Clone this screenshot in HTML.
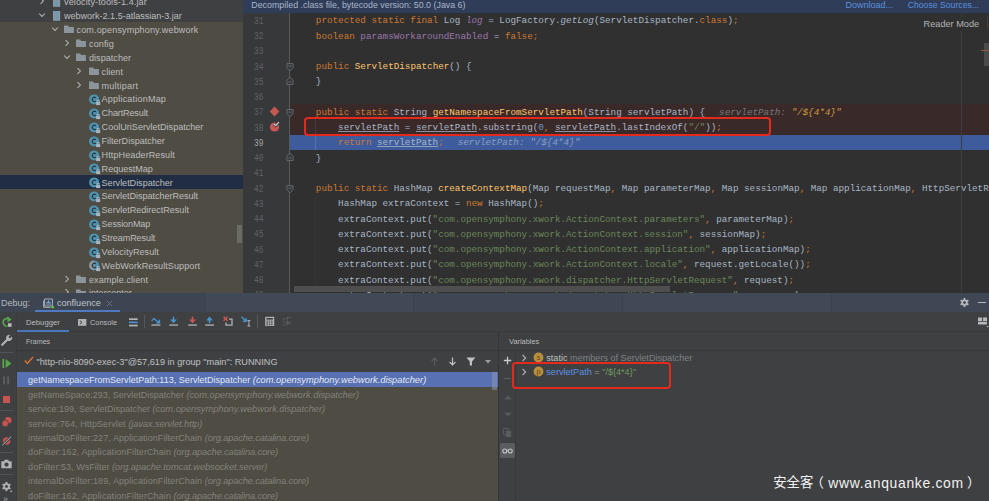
<!DOCTYPE html>
<html><head><meta charset="utf-8"><title>Debug</title>
<style>
*{box-sizing:border-box;margin:0;padding:0}
html,body{width:989px;height:501px;overflow:hidden;background:#3e4042;}
body{position:relative;font-family:"Liberation Sans", "Noto Sans CJK SC", sans-serif;font-size:9.2px;color:#bbbbbb;}
.abs{position:absolute}
#tree{position:absolute;left:0;top:0;width:243px;height:293px;background:#4f4c43;overflow:hidden}
#tree .top{position:absolute;left:0;top:0;width:243px;height:21.6px;background:#3e4042}
.tr{position:absolute;left:0;width:243px;height:13.86px;line-height:13.86px;white-space:pre;color:#bdbdbd;font-size:9.08px}
.tr.sel{background:transparent}
.tr span.t{position:absolute;top:1px}
.tr svg{position:absolute}
#editor{position:absolute;left:243px;top:0;width:746px;height:293px;background:#303030;overflow:hidden}
#banner{position:absolute;left:0;top:0;width:746px;height:13.4px;background:#2f3d59;color:#aab6c8;line-height:10px;font-size:8.87px;white-space:pre}
#banner span{position:absolute;top:0.1px}
#banner .lnk{color:#5b8fdd}
#gutter{position:absolute;left:0;top:13.4px;width:47px;height:280px;background:#373839;border-right:1px solid #58595b}
.ln{transform:scale(0.85,1.14);transform-origin:0 50%;position:absolute;left:10.6px;font-family:"Liberation Mono", monospace;font-size:9.27px;color:#606366;line-height:15.25px;height:15.25px}
.cl{position:absolute;left:50.6px;font-family:"Liberation Mono", monospace;font-size:9.27px;color:#a9b7c6;line-height:15.25px;height:15.25px;white-space:pre}
.k{color:#cc7832} .s{color:#6a8759} .m{color:#ffc66d} .f{color:#9876aa} .n{color:#6897bb}
.i{font-style:italic} .u{text-decoration:underline;text-underline-offset:1.2px;text-decoration-thickness:0.7px;text-decoration-color:rgba(169,183,198,0.75)}
.h{color:#787878;font-style:italic} .hv{color:#cc9b3e;font-style:italic}

#dbg{position:absolute;left:0;top:293px;width:989px;height:208px;background:#3e4042;overflow:hidden}
#dbg .hdr{position:absolute;left:0;top:0;width:989px;height:19px;background:#3d4553}
.tx{position:absolute;white-space:pre;line-height:12px;height:12px;font-size:9.1px;color:#bbbbbb}
.fr{position:absolute;left:28.1px;white-space:pre;line-height:14.4px;height:14.4px;font-size:9.01px;color:#83827c}
.fr i{font-style:italic;font-size:9.29px}
.hl{position:absolute;height:1px;background:#323232}
.vl{position:absolute;width:1px;background:#323232}
</style></head>
<body>
<div id="tree"><div class="top"></div><div class="abs" style="left:0;top:175px;width:243px;height:14px;background:#202d43"></div>
<div class="tr" style="top:-4.63px"><svg class="abs" style="left:36.8px;top:1.0299999999999994px" width="10" height="10" viewBox="-5 -5 10 10"><path d="M-1.5,-2.9 L1.4,0 L-1.5,2.9" fill="none" stroke="#b4b6b6" stroke-width="1.05"/></svg><svg class="abs" style="left:52.9px;top:1.5299999999999994px" width="8" height="10" viewBox="0 0 8 10"><rect x="0" y="0" width="7.2" height="9.8" fill="#8d969d"/><path d="M2.1,0 h1.4 v1.2 h-1.4z M3.4,1.2 h1.4 v1.2 h-1.4z M2.1,2.4 h1.4 v1.2 h-1.4z M3.4,3.6 h1.4 v1.2 h-1.4z M2.1,4.8 h1.4 v1.2 h-1.4z M3.4,6 h1.4 v1.2 h-1.4z M2.1,7.2 h1.4 v1.2 h-1.4z M3.4,8.4 h1.4 v1.4 h-1.4z" fill="#4a9fd4"/></svg><span class="t" style="left:64px;letter-spacing:0.098px">velocity-tools-1.4.jar</span></div>
<div class="tr" style="top:9.23px"><svg class="abs" style="left:36.8px;top:1.0299999999999994px" width="10" height="10" viewBox="-5 -5 10 10"><path d="M-2.9,-1.5 L0,1.4 L2.9,-1.5" fill="none" stroke="#b4b6b6" stroke-width="1.05"/></svg><svg class="abs" style="left:52.9px;top:1.5299999999999994px" width="8" height="10" viewBox="0 0 8 10"><rect x="0" y="0" width="7.2" height="9.8" fill="#8d969d"/><path d="M2.1,0 h1.4 v1.2 h-1.4z M3.4,1.2 h1.4 v1.2 h-1.4z M2.1,2.4 h1.4 v1.2 h-1.4z M3.4,3.6 h1.4 v1.2 h-1.4z M2.1,4.8 h1.4 v1.2 h-1.4z M3.4,6 h1.4 v1.2 h-1.4z M2.1,7.2 h1.4 v1.2 h-1.4z M3.4,8.4 h1.4 v1.4 h-1.4z" fill="#4a9fd4"/></svg><span class="t" style="left:64px;letter-spacing:-0.03px">webwork-2.1.5-atlassian-3.jar</span></div>
<div class="tr" style="top:23.09px"><svg class="abs" style="left:49.6px;top:1.0299999999999994px" width="10" height="10" viewBox="-5 -5 10 10"><path d="M-2.9,-1.5 L0,1.4 L2.9,-1.5" fill="none" stroke="#b4b6b6" stroke-width="1.05"/></svg><svg class="abs" style="left:64px;top:2.33px" width="10" height="9" viewBox="0 0 10 9"><path d="M0,0.4 H4.2 L5,1.9 H9.9 V8 H0 Z" fill="#8d959c"/></svg><span class="t" style="left:76.5px;letter-spacing:0.128px">com.opensymphony.webwork</span></div>
<div class="tr" style="top:36.95px"><svg class="abs" style="left:61.900000000000006px;top:1.0299999999999994px" width="10" height="10" viewBox="-5 -5 10 10"><path d="M-1.5,-2.9 L1.4,0 L-1.5,2.9" fill="none" stroke="#b4b6b6" stroke-width="1.05"/></svg><svg class="abs" style="left:75.9px;top:2.33px" width="10" height="9" viewBox="0 0 10 9"><path d="M0,0.4 H4.2 L5,1.9 H9.9 V8 H0 Z" fill="#8d959c"/></svg><span class="t" style="left:89px;letter-spacing:0.111px">config</span></div>
<div class="tr" style="top:50.81px"><svg class="abs" style="left:61.900000000000006px;top:1.0299999999999994px" width="10" height="10" viewBox="-5 -5 10 10"><path d="M-2.9,-1.5 L0,1.4 L2.9,-1.5" fill="none" stroke="#b4b6b6" stroke-width="1.05"/></svg><svg class="abs" style="left:75.9px;top:2.33px" width="10" height="9" viewBox="0 0 10 9"><path d="M0,0.4 H4.2 L5,1.9 H9.9 V8 H0 Z" fill="#8d959c"/></svg><span class="t" style="left:89px;letter-spacing:0.021px">dispatcher</span></div>
<div class="tr" style="top:64.67px"><svg class="abs" style="left:74.2px;top:1.0299999999999994px" width="10" height="10" viewBox="-5 -5 10 10"><path d="M-1.5,-2.9 L1.4,0 L-1.5,2.9" fill="none" stroke="#b4b6b6" stroke-width="1.05"/></svg><svg class="abs" style="left:89.2px;top:2.33px" width="10" height="9" viewBox="0 0 10 9"><path d="M0,0.4 H4.2 L5,1.9 H9.9 V8 H0 Z" fill="#8d959c"/></svg><span class="t" style="left:101.6px;letter-spacing:0.033px">client</span></div>
<div class="tr" style="top:78.53px"><svg class="abs" style="left:74.2px;top:1.0299999999999994px" width="10" height="10" viewBox="-5 -5 10 10"><path d="M-1.5,-2.9 L1.4,0 L-1.5,2.9" fill="none" stroke="#b4b6b6" stroke-width="1.05"/></svg><svg class="abs" style="left:89.2px;top:2.33px" width="10" height="9" viewBox="0 0 10 9"><path d="M0,0.4 H4.2 L5,1.9 H9.9 V8 H0 Z" fill="#8d959c"/></svg><span class="t" style="left:101.6px;letter-spacing:0.199px">multipart</span></div>
<div class="tr" style="top:92.39px"><svg class="abs" style="left:88.8px;top:1.7299999999999995px" width="12" height="12" viewBox="0 0 12 12"><circle cx="5.1" cy="5.4" r="5" fill="#4f92ae"/><path d="M6.9,3.9 A2.1,2.1 0 1 0 6.9,6.9" fill="none" stroke="#27353d" stroke-width="1.15"/><rect x="7.1" y="8.1" width="4.1" height="3" fill="#a9b4bf"/><rect x="8.2" y="6.5" width="2" height="2.2" fill="none" stroke="#a9b4bf" stroke-width="0.8"/></svg><span class="t" style="left:101.6px;letter-spacing:0.173px">ApplicationMap</span></div>
<div class="tr" style="top:106.25px"><svg class="abs" style="left:88.8px;top:1.7299999999999995px" width="12" height="12" viewBox="0 0 12 12"><circle cx="5.1" cy="5.4" r="5" fill="#4f92ae"/><path d="M6.9,3.9 A2.1,2.1 0 1 0 6.9,6.9" fill="none" stroke="#27353d" stroke-width="1.15"/><rect x="7.1" y="8.1" width="4.1" height="3" fill="#a9b4bf"/><rect x="8.2" y="6.5" width="2" height="2.2" fill="none" stroke="#a9b4bf" stroke-width="0.8"/></svg><span class="t" style="left:101.6px;letter-spacing:-0.149px">ChartResult</span></div>
<div class="tr" style="top:120.11px"><svg class="abs" style="left:88.8px;top:1.7299999999999995px" width="12" height="12" viewBox="0 0 12 12"><circle cx="5.1" cy="5.4" r="5" fill="#4f92ae"/><path d="M6.9,3.9 A2.1,2.1 0 1 0 6.9,6.9" fill="none" stroke="#27353d" stroke-width="1.15"/><rect x="7.1" y="8.1" width="4.1" height="3" fill="#a9b4bf"/><rect x="8.2" y="6.5" width="2" height="2.2" fill="none" stroke="#a9b4bf" stroke-width="0.8"/></svg><span class="t" style="left:101.6px;letter-spacing:-0.005px">CoolUriServletDispatcher</span></div>
<div class="tr" style="top:133.97px"><svg class="abs" style="left:88.8px;top:1.7299999999999995px" width="12" height="12" viewBox="0 0 12 12"><circle cx="5.1" cy="5.4" r="5" fill="#4f92ae"/><path d="M6.9,3.9 A2.1,2.1 0 1 0 6.9,6.9" fill="none" stroke="#27353d" stroke-width="1.15"/><rect x="7.1" y="8.1" width="4.1" height="3" fill="#a9b4bf"/><rect x="8.2" y="6.5" width="2" height="2.2" fill="none" stroke="#a9b4bf" stroke-width="0.8"/></svg><span class="t" style="left:101.6px;letter-spacing:-0.024px">FilterDispatcher</span></div>
<div class="tr" style="top:147.83px"><svg class="abs" style="left:88.8px;top:1.7299999999999995px" width="12" height="12" viewBox="0 0 12 12"><circle cx="5.1" cy="5.4" r="5" fill="#4f92ae"/><path d="M6.9,3.9 A2.1,2.1 0 1 0 6.9,6.9" fill="none" stroke="#27353d" stroke-width="1.15"/><rect x="7.1" y="8.1" width="4.1" height="3" fill="#a9b4bf"/><rect x="8.2" y="6.5" width="2" height="2.2" fill="none" stroke="#a9b4bf" stroke-width="0.8"/></svg><span class="t" style="left:101.6px;letter-spacing:0.071px">HttpHeaderResult</span></div>
<div class="tr" style="top:161.69px"><svg class="abs" style="left:88.8px;top:1.7299999999999995px" width="12" height="12" viewBox="0 0 12 12"><circle cx="5.1" cy="5.4" r="5" fill="#4f92ae"/><path d="M6.9,3.9 A2.1,2.1 0 1 0 6.9,6.9" fill="none" stroke="#27353d" stroke-width="1.15"/><rect x="7.1" y="8.1" width="4.1" height="3" fill="#a9b4bf"/><rect x="8.2" y="6.5" width="2" height="2.2" fill="none" stroke="#a9b4bf" stroke-width="0.8"/></svg><span class="t" style="left:101.6px;letter-spacing:-0.018px">RequestMap</span></div>
<div class="tr sel" style="top:175.55px"><svg class="abs" style="left:88.8px;top:1.7299999999999995px" width="12" height="12" viewBox="0 0 12 12"><circle cx="5.1" cy="5.4" r="5" fill="#4f92ae"/><path d="M6.9,3.9 A2.1,2.1 0 1 0 6.9,6.9" fill="none" stroke="#27353d" stroke-width="1.15"/><rect x="7.1" y="8.1" width="4.1" height="3" fill="#a9b4bf"/><rect x="8.2" y="6.5" width="2" height="2.2" fill="none" stroke="#a9b4bf" stroke-width="0.8"/></svg><span class="t" style="left:101.6px;letter-spacing:-0.033px">ServletDispatcher</span></div>
<div class="tr" style="top:189.41px"><svg class="abs" style="left:88.8px;top:1.7299999999999995px" width="12" height="12" viewBox="0 0 12 12"><circle cx="5.1" cy="5.4" r="5" fill="#4f92ae"/><path d="M6.9,3.9 A2.1,2.1 0 1 0 6.9,6.9" fill="none" stroke="#27353d" stroke-width="1.15"/><rect x="7.1" y="8.1" width="4.1" height="3" fill="#a9b4bf"/><rect x="8.2" y="6.5" width="2" height="2.2" fill="none" stroke="#a9b4bf" stroke-width="0.8"/></svg><span class="t" style="left:101.6px;letter-spacing:-0.047px">ServletDispatcherResult</span></div>
<div class="tr" style="top:203.27px"><svg class="abs" style="left:88.8px;top:1.7299999999999995px" width="12" height="12" viewBox="0 0 12 12"><circle cx="5.1" cy="5.4" r="5" fill="#4f92ae"/><path d="M6.9,3.9 A2.1,2.1 0 1 0 6.9,6.9" fill="none" stroke="#27353d" stroke-width="1.15"/><rect x="7.1" y="8.1" width="4.1" height="3" fill="#a9b4bf"/><rect x="8.2" y="6.5" width="2" height="2.2" fill="none" stroke="#a9b4bf" stroke-width="0.8"/></svg><span class="t" style="left:101.6px;letter-spacing:-0.024px">ServletRedirectResult</span></div>
<div class="tr" style="top:217.13px"><svg class="abs" style="left:88.8px;top:1.7299999999999995px" width="12" height="12" viewBox="0 0 12 12"><circle cx="5.1" cy="5.4" r="5" fill="#4f92ae"/><path d="M6.9,3.9 A2.1,2.1 0 1 0 6.9,6.9" fill="none" stroke="#27353d" stroke-width="1.15"/><rect x="7.1" y="8.1" width="4.1" height="3" fill="#a9b4bf"/><rect x="8.2" y="6.5" width="2" height="2.2" fill="none" stroke="#a9b4bf" stroke-width="0.8"/></svg><span class="t" style="left:101.6px;letter-spacing:-0.137px">SessionMap</span></div>
<div class="tr" style="top:230.99px"><svg class="abs" style="left:88.8px;top:1.7299999999999995px" width="12" height="12" viewBox="0 0 12 12"><circle cx="5.1" cy="5.4" r="5" fill="#4f92ae"/><path d="M6.9,3.9 A2.1,2.1 0 1 0 6.9,6.9" fill="none" stroke="#27353d" stroke-width="1.15"/><rect x="7.1" y="8.1" width="4.1" height="3" fill="#a9b4bf"/><rect x="8.2" y="6.5" width="2" height="2.2" fill="none" stroke="#a9b4bf" stroke-width="0.8"/></svg><span class="t" style="left:101.6px;letter-spacing:-0.117px">StreamResult</span></div>
<div class="tr" style="top:244.85px"><svg class="abs" style="left:88.8px;top:1.7299999999999995px" width="12" height="12" viewBox="0 0 12 12"><circle cx="5.1" cy="5.4" r="5" fill="#4f92ae"/><path d="M6.9,3.9 A2.1,2.1 0 1 0 6.9,6.9" fill="none" stroke="#27353d" stroke-width="1.15"/><rect x="7.1" y="8.1" width="4.1" height="3" fill="#a9b4bf"/><rect x="8.2" y="6.5" width="2" height="2.2" fill="none" stroke="#a9b4bf" stroke-width="0.8"/></svg><span class="t" style="left:101.6px;letter-spacing:0.012px">VelocityResult</span></div>
<div class="tr" style="top:258.71px"><svg class="abs" style="left:88.8px;top:1.7299999999999995px" width="12" height="12" viewBox="0 0 12 12"><circle cx="5.1" cy="5.4" r="5" fill="#4f92ae"/><path d="M5.1,0.4 A5,5 0 0 0 5.1,10.4 Z" fill="#8f9599"/><path d="M6.9,3.9 A2.1,2.1 0 1 0 6.9,6.9" fill="none" stroke="#27353d" stroke-width="1.15"/><rect x="7.1" y="8.1" width="4.1" height="3" fill="#a9b4bf"/><rect x="8.2" y="6.5" width="2" height="2.2" fill="none" stroke="#a9b4bf" stroke-width="0.8"/></svg><span class="t" style="left:101.6px;letter-spacing:0.078px">WebWorkResultSupport</span></div>
<div class="tr" style="top:272.57px"><svg class="abs" style="left:61.900000000000006px;top:1.0299999999999994px" width="10" height="10" viewBox="-5 -5 10 10"><path d="M-1.5,-2.9 L1.4,0 L-1.5,2.9" fill="none" stroke="#b4b6b6" stroke-width="1.05"/></svg><svg class="abs" style="left:75.9px;top:2.33px" width="10" height="9" viewBox="0 0 10 9"><path d="M0,0.4 H4.2 L5,1.9 H9.9 V8 H0 Z" fill="#8d959c"/></svg><span class="t" style="left:89px;letter-spacing:0.069px">example.client</span></div>
<div class="tr" style="top:286.43px"><svg class="abs" style="left:61.900000000000006px;top:1.0299999999999994px" width="10" height="10" viewBox="-5 -5 10 10"><path d="M-1.5,-2.9 L1.4,0 L-1.5,2.9" fill="none" stroke="#b4b6b6" stroke-width="1.05"/></svg><svg class="abs" style="left:75.9px;top:2.33px" width="10" height="9" viewBox="0 0 10 9"><path d="M0,0.4 H4.2 L5,1.9 H9.9 V8 H0 Z" fill="#8d959c"/></svg><span class="t" style="left:89px;letter-spacing:0px">interceptor</span></div>
<div class="abs" style="left:236.5px;top:225px;width:5.6px;height:18px;background:#6c6b63"></div>
</div>
<div id="editor">
<div class="abs" style="left:47px;top:104.2px;width:700px;height:30.6px;background:#3a2929"></div>
<div class="abs" style="left:47px;top:134.8px;width:700px;height:15.2px;background:#3e5c9c"></div>
<div id="gutter"></div>
<div class="abs" style="left:71.8px;top:119px;width:1px;height:16px;background:#4a3a3a"></div>
<div class="abs" style="left:71.8px;top:135px;width:1px;height:15px;background:#5573b0"></div>
<div class="abs" style="left:71.8px;top:196px;width:1px;height:97px;background:#353535"></div>
<div class="abs" style="left:717.9px;top:13.6px;width:1px;height:280px;background:#3e3e3e"></div>
<div class="ln" style="top:13.87px;color:#606366">31</div>
<div class="ln" style="top:29.12px;color:#606366">32</div>
<div class="ln" style="top:44.38px;color:#606366">33</div>
<div class="ln" style="top:59.63px;color:#606366">34</div>
<div class="ln" style="top:74.88px;color:#606366">35</div>
<div class="ln" style="top:90.12px;color:#606366">36</div>
<div class="ln" style="top:105.38px;color:#606366">37</div>
<div class="ln" style="top:120.62px;color:#606366">38</div>
<div class="ln" style="top:135.88px;color:#a4a3a3">39</div>
<div class="ln" style="top:151.12px;color:#606366">40</div>
<div class="ln" style="top:166.38px;color:#606366">41</div>
<div class="ln" style="top:181.62px;color:#606366">42</div>
<div class="ln" style="top:196.88px;color:#606366">43</div>
<div class="ln" style="top:212.12px;color:#606366">44</div>
<div class="ln" style="top:227.38px;color:#606366">45</div>
<div class="ln" style="top:242.62px;color:#606366">46</div>
<div class="ln" style="top:257.88px;color:#606366">47</div>
<div class="ln" style="top:273.12px;color:#606366">48</div>
<div class="ln" style="top:288.38px;color:#606366">49</div>
<div class="cl" style="top:13.27px">    <span class="k">protected static final</span> Log <span class="f i">log</span> = LogFactory.<span class="i">getLog</span>(ServletDispatcher.<span class="k">class</span>)<span class="k">;</span></div>
<div class="cl" style="top:28.52px">    <span class="k">boolean </span><span class="f">paramsWorkaroundEnabled</span> = <span class="k">false;</span></div>
<div class="cl" style="top:59.03px">    <span class="k">public </span><span class="m">ServletDispatcher</span>() {</div>
<div class="cl" style="top:74.28px">    }</div>
<div class="cl" style="top:104.78px">    <span class="k">public static</span> String <span class="m">getNamespaceFromServletPath</span>(String servletPath) {<span class="h" style="margin-left:14px">servletPath: </span><span class="hv">&quot;/${4*4}&quot;</span></div>
<div class="cl" style="top:120.03px">        <span class="u">servletPath</span> = <span class="u">servletPath</span>.substring(<span class="n">0</span><span class="k">, </span><span class="u">servletPath</span>.lastIndexOf(<span class="s">&quot;/&quot;</span>))<span class="k">;</span></div>
<div class="cl" style="top:135.28px">        <span class="k">return </span><span class="u">servletPath</span><span class="k">;</span><span class="h" style="color:#8c9fc2;margin-left:14px">servletPath: &quot;/${4*4}&quot;</span></div>
<div class="cl" style="top:150.53px">    }</div>
<div class="cl" style="top:181.03px">    <span class="k">public static</span> HashMap <span class="m">createContextMap</span>(Map requestMap<span class="k">,</span> Map parameterMap<span class="k">,</span> Map sessionMap<span class="k">,</span> Map applicationMap<span class="k">,</span> HttpServletRequest request<span class="k">,</span> HttpServletResponse response</div>
<div class="cl" style="top:196.28px">        HashMap extraContext = <span class="k">new</span> HashMap()<span class="k">;</span></div>
<div class="cl" style="top:211.53px">        extraContext.put(<span class="s">&quot;com.opensymphony.xwork.ActionContext.parameters&quot;</span><span class="k">, </span>parameterMap)<span class="k">;</span></div>
<div class="cl" style="top:226.78px">        extraContext.put(<span class="s">&quot;com.opensymphony.xwork.ActionContext.session&quot;</span><span class="k">, </span>sessionMap)<span class="k">;</span></div>
<div class="cl" style="top:242.03px">        extraContext.put(<span class="s">&quot;com.opensymphony.xwork.ActionContext.application&quot;</span><span class="k">, </span>applicationMap)<span class="k">;</span></div>
<div class="cl" style="top:257.27px">        extraContext.put(<span class="s">&quot;com.opensymphony.xwork.ActionContext.locale&quot;</span><span class="k">, </span>request.getLocale())<span class="k">;</span></div>
<div class="cl" style="top:272.52px">        extraContext.put(<span class="s">&quot;com.opensymphony.xwork.dispatcher.HttpServletRequest&quot;</span><span class="k">, </span>request)<span class="k">;</span></div>
<div class="cl" style="top:287.77px">        extraContext.put(<span class="s">&quot;com.opensymphony.xwork.dispatcher.HttpServletResponse&quot;</span><span class="k">, </span>response)<span class="k">;</span></div>
<svg class="abs" style="left:25.8px;top:106.2px" width="11" height="11" viewBox="-5.5 -5.5 11 11"><path d="M0,-4.9 L4.8,0 L0,4.9 L-4.8,0 Z" fill="#c55853"/></svg>
<svg class="abs" style="left:25.8px;top:120.5px" width="12" height="12" viewBox="-5.5 -6 12 12"><circle cx="0" cy="0" r="4.6" fill="#c55853"/><path d="M-0.6,-3 L1.3,-1.4 L4.4,-4.8" fill="none" stroke="#373839" stroke-width="2.6"/><path d="M-0.6,-3 L1.3,-1.4 L4.4,-4.8" fill="none" stroke="#e4e4e4" stroke-width="1.1"/></svg>
<svg class="abs" style="left:41.6px;top:61.75px" width="10" height="10" viewBox="-5 -5 10 10"><path d="M-3.1,-3.4 H3.1 V0.6 L0,3.9 L-3.1,0.6 Z M-1.6,-0.9 H1.6" fill="#373839" stroke="#6a6c6f" stroke-width="0.9"/></svg>
<svg class="abs" style="left:41.6px;top:75.80px" width="10" height="10" viewBox="-5 -5 10 10"><path d="M-3.1,3.6 H3.1 V-0.6 L0,-4 L-3.1,-0.6 Z M-1.6,1 H1.6" fill="#373839" stroke="#6a6c6f" stroke-width="0.9"/></svg>
<svg class="abs" style="left:41.6px;top:107.50px" width="10" height="10" viewBox="-5 -5 10 10"><path d="M-3.1,-3.4 H3.1 V0.6 L0,3.9 L-3.1,0.6 Z M-1.6,-0.9 H1.6" fill="#373839" stroke="#6a6c6f" stroke-width="0.9"/></svg>
<svg class="abs" style="left:41.6px;top:152.05px" width="10" height="10" viewBox="-5 -5 10 10"><path d="M-3.1,3.6 H3.1 V-0.6 L0,-4 L-3.1,-0.6 Z M-1.6,1 H1.6" fill="#373839" stroke="#6a6c6f" stroke-width="0.9"/></svg>
<svg class="abs" style="left:41.6px;top:183.75px" width="10" height="10" viewBox="-5 -5 10 10"><path d="M-3.1,-3.4 H3.1 V0.6 L0,3.9 L-3.1,0.6 Z M-1.6,-0.9 H1.6" fill="#373839" stroke="#6a6c6f" stroke-width="0.9"/></svg>
<div class="abs" style="left:61px;top:116.6px;width:467px;height:19.4px;border:2.4px solid #e5291d;border-radius:4px"></div>
<div class="abs" style="left:676.6px;top:17px;padding:1.5px 6px 1.5px 4px;background:#303030;font-size:9.16px;line-height:11px;color:#b3b3b3;white-space:pre">Reader Mode</div>
<div class="abs" style="left:744px;top:16px;width:1px;height:13px;background:#404040"></div>
<div class="abs" style="left:741.4px;top:42.8px;width:5px;height:23.5px;background:#4b4b4b"></div>
<div class="abs" style="left:738.3px;top:50.3px;width:8px;height:1px;background:#8f5a3c"></div>
<div class="abs" style="left:51px;top:286.3px;width:376px;height:6px;background:#4e4e4e"></div>
<div id="banner"><span style="left:8.3px">Decompiled .class file, bytecode version: 50.0 (Java 6)</span><span class="lnk" style="left:602.6px;font-size:9px">Download...</span><span class="lnk" style="left:664.7px;font-size:8.68px">Choose Sources...</span></div>
</div>
<div id="dbg">
<div class="hdr"></div>
<div class="abs" style="left:0px;top:0;width:205px;height:19px;background:#3d4553"></div>
<div class="abs" style="left:205px;top:0;width:208px;height:19px;background:#414957"></div>
<div class="abs" style="left:413px;top:0;width:209px;height:19px;background:#3f4755"></div>
<div class="abs" style="left:622px;top:0;width:209px;height:19px;background:#414957"></div>
<div class="abs" style="left:831px;top:0;width:158px;height:19px;background:#3f4755"></div>
<div class="abs" style="left:205px;top:0;width:1px;height:19px;background:#3a424f"></div>
<div class="abs" style="left:413px;top:0;width:1px;height:19px;background:#3a424f"></div>
<div class="abs" style="left:622px;top:0;width:1px;height:19px;background:#3a424f"></div>
<div class="abs" style="left:831px;top:0;width:1px;height:19px;background:#3a424f"></div>
<div class="abs" style="left:34.9px;top:16.80000000000001px;width:85px;height:2.2px;background:#4f7ac0"></div>
<div class="tx" style="left:1px;top:4.199999999999989px;font-size:9.02px;color:#b4b8bd">Debug:</div>
<div class="tx" style="left:56.9px;top:4.199999999999989px;font-size:9.1px;color:#bfc3c7">confluence</div>
<svg class="abs" style="left:43px;top:5px" width="12" height="11" viewBox="0 0 12 11"><path d="M1.6,1 H9.4 V8 H1.6 Z" fill="none" stroke="#a8b0ba" stroke-width="1"/><path d="M0.5,2.6 V9.4 H7.5" fill="none" stroke="#a8b0ba" stroke-width="0.9"/><path d="M3.3,4.3 H7.8 M5.5,2.4 V4.3 M3.3,6 H7.8" stroke="#7fb0d8" stroke-width="1"/><circle cx="9.8" cy="9.3" r="1.3" fill="#4fd12a"/></svg>
<svg class="abs" style="left:105.5px;top:7.199999999999989px" width="7" height="7" viewBox="0 0 7 7"><path d="M1,1 L6,6 M6,1 L1,6" stroke="#6e7682" stroke-width="0.9"/></svg>
<svg class="abs" style="left:958.6px;top:4px" width="11" height="11" viewBox="-6 -6 12 12"><g fill="#b4b8bd"><circle r="3.4"/><rect x="-1" y="-4.9" width="2" height="2.4" transform="rotate(0)"/><rect x="-1" y="-4.9" width="2" height="2.4" transform="rotate(60)"/><rect x="-1" y="-4.9" width="2" height="2.4" transform="rotate(120)"/><rect x="-1" y="-4.9" width="2" height="2.4" transform="rotate(180)"/><rect x="-1" y="-4.9" width="2" height="2.4" transform="rotate(240)"/><rect x="-1" y="-4.9" width="2" height="2.4" transform="rotate(300)"/></g><circle r="1.5" fill="#3d4553"/></svg>
<div class="abs" style="left:977.5px;top:9px;width:8px;height:1.2px;background:#b4b8bd"></div>
<svg class="abs" style="left:977.8px;top:24.19999999999999px" width="11" height="11" viewBox="0 0 11 11"><path d="M0,0.5 h4 v3.4 h-4z M5,0.5 h4 v3.4 h-4z M0,4.8 h9 v2.8 h-9z" fill="#b4b8bd"/><path d="M8.4,9 h2.6 l-1.3,1.5z" fill="#b4b8bd"/></svg>
<div class="vl" style="left:16px;top:19px;height:190px;background:#393b3d"></div>
<div class="hl" style="left:0;top:58.69999999999999px;width:13px;background:#515456"></div>
<div class="hl" style="left:0;top:117.39999999999998px;width:13px;background:#515456"></div>
<div class="hl" style="left:0;top:159px;width:13px;background:#515456"></div>
<div class="hl" style="left:0;top:181px;width:13px;background:#515456"></div>
<svg class="abs" style="left:0.5px;top:23.399999999999977px" width="12" height="12" viewBox="0 0 12 12"><path d="M6.6,10.2 A3.9,3.9 0 1 1 9.4,4.2" fill="none" stroke="#57a64a" stroke-width="1.7"/><path d="M6.4,0.4 L10.6,3.6 L6.4,6.6 Z" fill="#57a64a"/><rect x="7" y="7.2" width="3.6" height="3.6" fill="#b7b9bb"/></svg>
<svg class="abs" style="left:0.5px;top:41px" width="12" height="12" viewBox="0 0 12 12"><path d="M1.2,10.8 L6.2,5.8" stroke="#b0b2b4" stroke-width="2.2" stroke-linecap="round"/><path d="M10.9,2.6 L8.9,4.4 L7.4,3 L9.3,1.1 A3.1,3.1 0 1 0 10.9,2.6 Z" fill="#b0b2b4"/></svg>
<svg class="abs" style="left:2px;top:64.80000000000001px" width="10" height="11" viewBox="0 0 10 11"><rect x="0.4" y="1" width="1.8" height="9" fill="#57a64a"/><path d="M3.6,1 L9.4,5.5 L3.6,10 Z" fill="#57a64a"/></svg>
<svg class="abs" style="left:2px;top:83px" width="9" height="9" viewBox="0 0 9 9"><rect x="1.2" y="0.5" width="1.8" height="8" fill="#5d6062"/><rect x="5.2" y="0.5" width="1.8" height="8" fill="#5d6062"/></svg>
<div class="abs" style="left:2.8px;top:103px;width:7.3px;height:7.4px;background:#c75450"></div>
<svg class="abs" style="left:1px;top:122.60000000000002px" width="12" height="12" viewBox="0 0 12 12"><circle cx="7.2" cy="4.2" r="3.3" fill="#c75450"/><circle cx="4.2" cy="7.4" r="3.3" fill="#c75450" stroke="#3e4042" stroke-width="0.7"/></svg>
<svg class="abs" style="left:1px;top:141.60000000000002px" width="12" height="12" viewBox="0 0 12 12"><circle cx="5.6" cy="6" r="3.7" fill="#c75450"/><path d="M1.4,10.2 L10.2,1.6" stroke="#3e4042" stroke-width="2.6"/><path d="M1.4,10.2 L10.2,1.6" stroke="#b6b8ba" stroke-width="1"/></svg>
<svg class="abs" style="left:1px;top:165.60000000000002px" width="11" height="10" viewBox="0 0 11 10"><path d="M0.3,2.2 H3 L3.8,0.7 H7.2 L8,2.2 H10.7 V9.2 H0.3 Z" fill="#b0b2b4"/><circle cx="5.5" cy="5.6" r="2.1" fill="#3e4042"/></svg>
<svg class="abs" style="left:0.5px;top:187.5px" width="13" height="13" viewBox="-5.5 -5.5 13 13"><g fill="#b0b2b4"><circle r="3.2"/><rect x="-0.95" y="-4.6" width="1.9" height="2.2" transform="rotate(0)"/><rect x="-0.95" y="-4.6" width="1.9" height="2.2" transform="rotate(60)"/><rect x="-0.95" y="-4.6" width="1.9" height="2.2" transform="rotate(120)"/><rect x="-0.95" y="-4.6" width="1.9" height="2.2" transform="rotate(180)"/><rect x="-0.95" y="-4.6" width="1.9" height="2.2" transform="rotate(240)"/><rect x="-0.95" y="-4.6" width="1.9" height="2.2" transform="rotate(300)"/></g><circle r="1.4" fill="#3e4042"/><path d="M3.2,4.2 h3 l-1.5,1.7z" fill="#b0b2b4"/></svg>
<div class="tx" style="left:3px;top:200px;font-size:9px;color:#a0a2a4;letter-spacing:-1px">››</div>
<div class="abs" style="left:17px;top:36.69999999999999px;width:51.6px;height:2px;background:#4a74bb;z-index:2"></div>
<div class="tx" style="left:25.8px;top:24.19999999999999px;font-size:7.8px;transform:scaleX(0.987);transform-origin:0 50%">Debugger</div>
<svg class="abs" style="left:77.8px;top:25.80000000000001px" width="9" height="7" viewBox="0 0 9 7"><rect width="8.4" height="6.8" fill="#b0b2b4"/><path d="M1.8,1.6 L4,3.4 L1.8,5.2" fill="none" stroke="#3e4042" stroke-width="1"/></svg>
<div class="tx" style="left:90.2px;top:24.19999999999999px;font-size:7.8px;transform:scaleX(0.943);transform-origin:0 50%">Console</div>
<svg class="abs" style="left:128.6px;top:25px" width="9" height="9" viewBox="0 0 9 9"><rect y="0.3" width="8.7" height="1.7" fill="#b0b2b4"/><rect y="3.5" width="8.7" height="1.7" fill="#4b8fd6"/><rect y="6.7" width="8.7" height="1.7" fill="#b0b2b4"/></svg>
<div class="vl" style="left:144.3px;top:22px;height:13px;background:#55585a"></div>
<div class="vl" style="left:257.2px;top:22px;height:13px;background:#55585a"></div>
<svg class="abs" style="left:150.8px;top:23.399999999999977px" width="11" height="11" viewBox="0 0 11 11"><path d="M0.6,5.2 L3,2.4 L7.6,6.4" fill="none" stroke="#4a93cf" stroke-width="1.3"/><path d="M9.2,3 V7.6 H4.6 Z" fill="#4a93cf"/><rect x="0.4" y="8.4" width="9" height="1.3" fill="#b0b2b4"/></svg>
<svg class="abs" style="left:169px;top:23.399999999999977px" width="11" height="11" viewBox="0 0 11 11"><path d="M4.5,0.6 V4.2" fill="none" stroke="#4a93cf" stroke-width="1.5"/><path d="M1.2,3.4 H7.8 L4.5,7.2 Z" fill="#4a93cf"/><rect x="0.2" y="8.4" width="8.8" height="1.3" fill="#b0b2b4"/></svg>
<svg class="abs" style="left:187.6px;top:23.399999999999977px" width="11" height="11" viewBox="0 0 11 11"><path d="M4.5,0.6 V4.2" fill="none" stroke="#cf5753" stroke-width="1.5"/><path d="M1.2,3.4 H7.8 L4.5,7.2 Z" fill="#cf5753"/><rect x="0.2" y="8.4" width="8.8" height="1.3" fill="#b0b2b4"/></svg>
<svg class="abs" style="left:205.2px;top:23.399999999999977px" width="11" height="11" viewBox="0 0 11 11"><path d="M4.5,7.2 V3.8" fill="none" stroke="#4a93cf" stroke-width="1.5"/><path d="M1.2,4.4 H7.8 L4.5,0.6 Z" fill="#4a93cf"/><rect x="0.2" y="8.4" width="8.8" height="1.3" fill="#b0b2b4"/></svg>
<svg class="abs" style="left:223.2px;top:23.399999999999977px" width="11" height="11" viewBox="0 0 11 11"><path d="M0.6,0.8 L4.6,4.8 M4.6,0.8 L0.6,4.8" stroke="#cf5753" stroke-width="1.3"/><path d="M6,3.2 H9 V9.2 H3 V6.4" fill="none" stroke="#b0b2b4" stroke-width="1.3"/></svg>
<svg class="abs" style="left:241.4px;top:23.399999999999977px" width="11" height="11" viewBox="0 0 11 11"><path d="M0.6,0.8 L4,4.2" fill="none" stroke="#4a93cf" stroke-width="1.4"/><path d="M5.8,1.4 V6 H1.2 Z" fill="#4a93cf"/><path d="M6.4,4.6 H9.4 M7.9,4.6 V10 M6.4,10 H9.4" stroke="#b0b2b4" stroke-width="1"/></svg>
<svg class="abs" style="left:264.6px;top:23.399999999999977px" width="11" height="11" viewBox="0 0 11 11"><rect x="0.2" y="0.8" width="9" height="9.2" fill="#b0b2b4"/><rect x="1.5" y="2" width="6.4" height="1.6" fill="#3e4042"/><rect x="1.5" y="4.6" width="1.5" height="1" fill="#3e4042"/><rect x="1.5" y="6.3999999999999995" width="1.5" height="1" fill="#3e4042"/><rect x="1.5" y="8.2" width="1.5" height="1" fill="#3e4042"/><rect x="3.8" y="4.6" width="1.5" height="1" fill="#3e4042"/><rect x="3.8" y="6.3999999999999995" width="1.5" height="1" fill="#3e4042"/><rect x="3.8" y="8.2" width="1.5" height="1" fill="#3e4042"/><rect x="6.1" y="4.6" width="1.5" height="1" fill="#3e4042"/><rect x="6.1" y="6.3999999999999995" width="1.5" height="1" fill="#3e4042"/><rect x="6.1" y="8.2" width="1.5" height="1" fill="#3e4042"/></svg>
<svg class="abs" style="left:282.4px;top:23.399999999999977px" width="11" height="11" viewBox="0 0 11 11"><path d="M0.4,3 H3.4 L5,1.4 H9 M0.4,6 H9 M0.4,9 H3.4 L5,7.4 H9 M5.6,1.4 V9" fill="none" stroke="#5a5d5f" stroke-width="0.9"/></svg>
<div class="hl" style="left:17px;top:38px;width:972px;background:#393b3d"></div>
<div class="tx" style="left:25.8px;top:43px;font-size:7.8px;transform:scaleX(0.915);transform-origin:0 50%">Frames</div>
<div class="tx" style="left:508.5px;top:43px;font-size:7.8px;transform:scaleX(0.947);transform-origin:0 50%">Variables</div>
<div class="hl" style="left:17px;top:57px;width:972px;background:#353739"></div>
<svg class="abs" style="left:23.5px;top:63px" width="10" height="9" viewBox="0 0 10 9"><path d="M0.8,4.6 L3.4,7.4 L9,1" fill="none" stroke="#d9722e" stroke-width="1.5"/></svg>
<div class="tx" style="left:36.5px;top:62.60000000000002px;font-size:9.19px;color:#c0c0c0">"http-nio-8090-exec-3"@57,619 in group "main": RUNNING</div>
<svg class="abs" style="left:429.6px;top:63.5px" width="9" height="9" viewBox="0 0 9 9"><path d="M4.5,8.4 V1.2 M1.6,4 L4.5,1 L7.4,4" fill="none" stroke="#5c5f61" stroke-width="1.1"/></svg>
<svg class="abs" style="left:447.9px;top:63.5px" width="9" height="9" viewBox="0 0 9 9"><path d="M4.5,0.6 V7.8 M1.6,5 L4.5,8 L7.4,5" fill="none" stroke="#c0c2c4" stroke-width="1.2"/></svg>
<svg class="abs" style="left:465.6px;top:63.5px" width="10" height="9" viewBox="0 0 10 9"><path d="M0.4,0.6 H9.4 L6,4.4 V8.4 H3.8 V4.4 Z" fill="#c0c2c4"/></svg>
<svg class="abs" style="left:485px;top:66.60000000000002px" width="6" height="4" viewBox="0 0 6 4"><path d="M0,0 H6 L3,3.4 Z" fill="#9a9c9e"/></svg>
<div class="abs" style="left:17px;top:78.80000000000001px;width:481px;height:130px;background:#4f4c43"></div>
<div class="abs" style="left:17px;top:78.80000000000001px;width:481px;height:14.8px;background:#5771b3"></div>
<div class="abs" style="left:492.2px;top:78.80000000000001px;width:4.8px;height:18px;background:rgba(140,150,175,0.55)"></div>
<div class="fr" style="top:80.20px;color:#e4e8f2;"><span style="letter-spacing:0.025px">getNamespaceFromServletPath:113, ServletDispatcher </span><i style="letter-spacing:0.007px">(com.opensymphony.webwork.dispatcher)</i></div>
<div class="fr" style="top:94.65px;"><span style="letter-spacing:0.006px">getNameSpace:293, ServletDispatcher </span><i style="letter-spacing:-0.015px">(com.opensymphony.webwork.dispatcher)</i></div>
<div class="fr" style="top:109.10px;"><span style="letter-spacing:-0.005px">service:199, ServletDispatcher </span><i style="letter-spacing:-0.015px">(com.opensymphony.webwork.dispatcher)</i></div>
<div class="fr" style="top:123.55px;"><span style="letter-spacing:0.082px">service:764, HttpServlet </span><i style="letter-spacing:-0.091px">(javax.servlet.http)</i></div>
<div class="fr" style="top:138.00px;"><span style="letter-spacing:0.08px">internalDoFilter:227, ApplicationFilterChain </span><i style="letter-spacing:-0.143px">(org.apache.catalina.core)</i></div>
<div class="fr" style="top:152.45px;"><span style="letter-spacing:0.092px">doFilter:162, ApplicationFilterChain </span><i style="letter-spacing:-0.132px">(org.apache.catalina.core)</i></div>
<div class="fr" style="top:166.90px;"><span style="letter-spacing:0.044px">doFilter:53, WsFilter </span><i style="letter-spacing:-0.071px">(org.apache.tomcat.websocket.server)</i></div>
<div class="fr" style="top:181.35px;"><span style="letter-spacing:0.08px">internalDoFilter:189, ApplicationFilterChain </span><i style="letter-spacing:-0.143px">(org.apache.catalina.core)</i></div>
<div class="fr" style="top:195.80px;"><span style="letter-spacing:0.092px">doFilter:162, ApplicationFilterChain </span><i style="letter-spacing:-0.132px">(org.apache.catalina.core)</i></div>
<div class="vl" style="left:498px;top:39px;height:170px;background:#333537"></div>
<div class="vl" style="left:515.3px;top:58px;height:150px;background:#37393b"></div>
<svg class="abs" style="left:502.7px;top:63px" width="9" height="9" viewBox="0 0 9 9"><path d="M4.5,0.8 V8.2 M0.8,4.5 H8.2" stroke="#c9cbcd" stroke-width="1.3"/></svg>
<div class="abs" style="left:503.8px;top:84.60000000000002px;width:6.8px;height:1.1px;background:#5a5d5f"></div>
<svg class="abs" style="left:503.5px;top:102px" width="8" height="5" viewBox="0 0 8 5"><path d="M0,4.4 L4,0.4 L8,4.4 Z" fill="#57595b"/></svg>
<svg class="abs" style="left:503.5px;top:118.80000000000001px" width="8" height="5" viewBox="0 0 8 5"><path d="M0,0.4 L4,4.4 L8,0.4 Z" fill="#57595b"/></svg>
<svg class="abs" style="left:503px;top:134.60000000000002px" width="9" height="10" viewBox="0 0 9 10"><path d="M0.6,0.6 H5.6 V2.4 M0.6,0.6 V6.6 H2.4" fill="none" stroke="#5a5d5f" stroke-width="1"/><rect x="2.8" y="2.8" width="5.4" height="6.2" fill="#5a5d5f"/></svg>
<div class="abs" style="left:499.7px;top:150.10000000000002px;width:15.2px;height:15.2px;background:#5a5c5e;border-radius:1.5px"></div>
<svg class="abs" style="left:501.8px;top:154.60000000000002px" width="11" height="6" viewBox="0 0 11 6"><circle cx="2.8" cy="3" r="2" fill="none" stroke="#c4c6c8" stroke-width="1.1"/><circle cx="8.2" cy="3" r="2" fill="none" stroke="#c4c6c8" stroke-width="1.1"/><path d="M4.6,2.4 H6.4" stroke="#c4c6c8" stroke-width="1"/></svg>
<svg class="abs" style="left:520px;top:60.60000000000002px" width="8" height="8" viewBox="-4 -4 8 8"><path d="M-1.4,-3 L1.6,0 L-1.4,3" fill="none" stroke="#aeb0b2" stroke-width="1.1"/></svg>
<svg class="abs" style="left:533.3px;top:59.30000000000001px" width="11" height="11" viewBox="-5.5 -5.5 11 11"><circle r="4.9" fill="#b98f3d"/><text x="0" y="2.3" text-anchor="middle" font-family="Liberation Sans, sans-serif" font-size="7.2" font-weight="normal" fill="#5e4419">s</text></svg>
<div class="tx" style="left:546.3px;top:58.80000000000001px;font-size:9.1px"><span style="color:#c0c0c0">static</span><span style="color:#7f8183"> members of ServletDispatcher</span></div>
<svg class="abs" style="left:520px;top:74.60000000000002px" width="8" height="8" viewBox="-4 -4 8 8"><path d="M-1.4,-3 L1.6,0 L-1.4,3" fill="none" stroke="#aeb0b2" stroke-width="1.1"/></svg>
<svg class="abs" style="left:533.3px;top:73.30000000000001px" width="11" height="11" viewBox="-5.5 -5.5 11 11"><circle r="4.9" fill="#b98f3d"/><text x="0" y="2.3" text-anchor="middle" font-family="Liberation Sans, sans-serif" font-size="7.2" font-weight="normal" fill="#5e4419">p</text></svg>
<div class="tx" style="left:546.3px;top:72.80000000000001px;font-size:9.1px"><span style="color:#5f8fe0">servletPath</span><span style="color:#9a9c9e"> = </span><span style="color:#6e9a5e">"/${4*4}"</span></div>
<div class="abs" style="left:512.2px;top:69.19999999999999px;width:159px;height:27.2px;border:2.4px solid #e5291d;border-radius:4px"></div>
<div class="tx" style="left:773.2px;top:180.60000000000002px;font-size:13.35px;line-height:18px;height:18px;color:#f2f2f2">安全客</div>
<div class="tx" style="left:810.5px;top:180.60000000000002px;font-size:13.35px;line-height:18px;height:18px;color:#f2f2f2">（</div>
<div class="tx" style="left:828.3px;top:180.60000000000002px;font-size:13.35px;line-height:18px;height:18px;color:#f2f2f2;font-size:13.9px;letter-spacing:0.7px">www.anquanke.com</div>
<div class="tx" style="left:967px;top:180.60000000000002px;font-size:13.35px;line-height:18px;height:18px;color:#f2f2f2">）</div>
</div>
</body></html>
